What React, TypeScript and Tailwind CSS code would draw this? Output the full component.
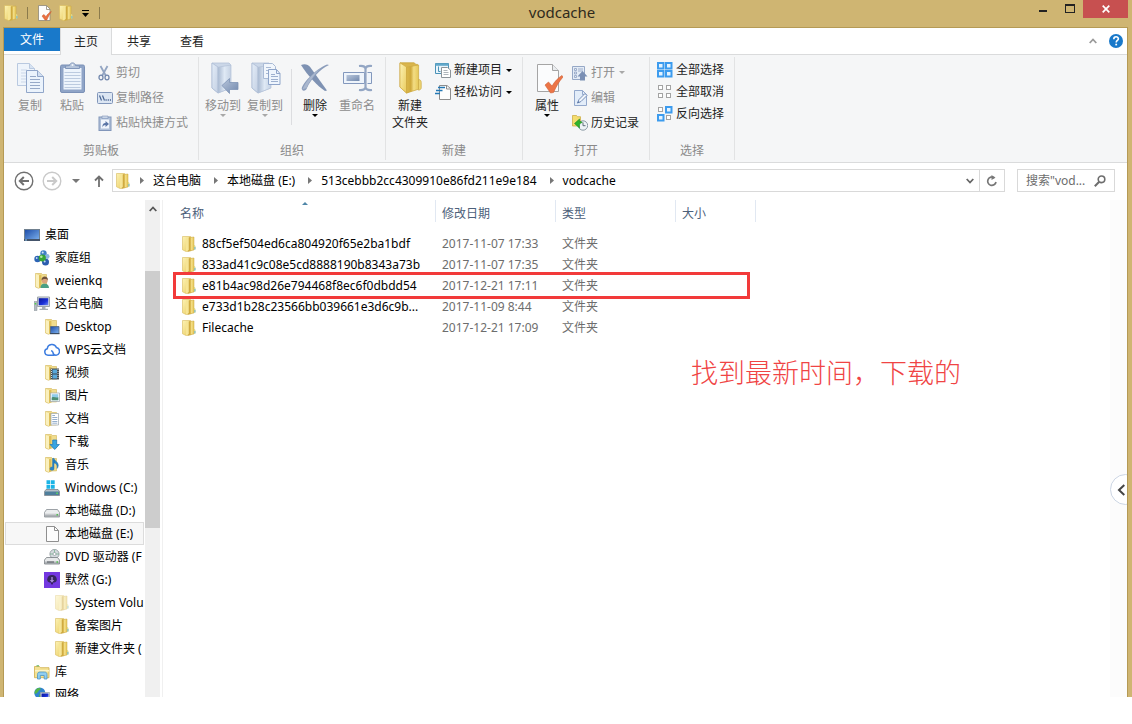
import type { ReactNode } from "react";

/* ---------- shared gradients ---------- */

function Gradients() {
  return (
    <svg className="absolute h-0 w-0" aria-hidden="true">
      <defs>
        <linearGradient id="gold" x1="0" x2="1" y1="0" y2="0">
          <stop offset="0" stopColor="#dcb94a" />
          <stop offset="0.35" stopColor="#cfa93c" />
          <stop offset="0.6" stopColor="#f3dd84" />
          <stop offset="1" stopColor="#e6c858" />
        </linearGradient>
        <linearGradient id="goldLeft" x1="0" x2="1" y1="0" y2="1">
          <stop offset="0" stopColor="#fcf2b4" />
          <stop offset="1" stopColor="#eacb5c" />
        </linearGradient>
        <linearGradient id="blueLeft" x1="0" x2="1" y1="0" y2="1">
          <stop offset="0" stopColor="#e4edf8" />
          <stop offset="1" stopColor="#c3d0e3" />
        </linearGradient>
        <linearGradient id="blueFront" x1="0" x2="1" y1="0" y2="0">
          <stop offset="0" stopColor="#a9b9d1" />
          <stop offset="0.5" stopColor="#dfe9f5" />
          <stop offset="1" stopColor="#c4d1e3" />
        </linearGradient>
        <linearGradient id="slate" x1="0" x2="1" y1="0" y2="1">
          <stop offset="0" stopColor="#b9c7dc" />
          <stop offset="1" stopColor="#7188ad" />
        </linearGradient>
        <linearGradient id="screen" x1="0" x2="1" y1="0" y2="1">
          <stop offset="0" stopColor="#1b4aa6" />
          <stop offset="1" stopColor="#7fb4f0" />
        </linearGradient>
        <linearGradient id="night" x1="0" x2="1" y1="0" y2="1">
          <stop offset="0" stopColor="#0a1796" />
          <stop offset="0.6" stopColor="#1a2fd8" />
          <stop offset="1" stopColor="#6f8df5" />
        </linearGradient>
        <linearGradient id="drive" x1="0" x2="0" y1="0" y2="1">
          <stop offset="0" stopColor="#f2f3f4" />
          <stop offset="1" stopColor="#8e9499" />
        </linearGradient>
      </defs>
    </svg>
  );
}

/* ---------- folder shapes ---------- */

function FolderShape() {
  return (
    <>
      <path d="M1.500.5h8l1 1v13L5 15.500 1.500 13.800z" fill="url(#goldLeft)" stroke="#d9bb5c" strokeWidth="0.600" />
      <path d="M5 1.800 8 1.200v13L5 15.300z" fill="#f6e596" />
      <path d="M8 1.500 13 1v13L6.800 15.400 8 13.800z" fill="url(#gold)" stroke="#cba742" strokeWidth="0.500" />
      <path d="M13 9c1.500.2 1.700 1 1.500 4.200L13 14z" fill="#dcd88a" />
      <path d="M13.400 11h1v2.400h-1z" fill="#6fb7d8" />
    </>
  );
}

function Icon({ children, className = "" }: { children: ReactNode; className?: string }) {
  return (
    <svg viewBox="0 0 16 16" className={`size-4 shrink-0 ${className}`} aria-hidden="true">
      {children}
    </svg>
  );
}

const FolderIcon = () => (
  <Icon>
    <FolderShape />
  </Icon>
);

const PaleFolderIcon = () => (
  <Icon className="opacity-50">
    <FolderShape />
  </Icon>
);

function FolderWith({ children }: { children: ReactNode }) {
  return (
    <Icon>
      <path d="M1.500.5h6l1 1h4v12.400H8L4.400 15.200 1.500 14z" fill="#f0dc8e" stroke="#d9bd66" strokeWidth="0.700" />
      <path d="M1.800.9 5 2.300v12.600L1.800 13.500z" fill="#faf0bd" />
      <path d="M5 2.300 7.400 1.700v12.400L5 14.900z" fill="#dfbf58" />
      {children}
    </Icon>
  );
}

function BigFolderShape() {
  return (
    <>
      <path d="M1 .8h14l2 1.600h1.600V26L7.600 31 1 25z" fill="#d9b54c" stroke="#c9a53c" strokeWidth="0.800" />
      <path d="M1 .9 7.600 5v26L1 25.200z" fill="url(#goldLeft)" stroke="#d2ae45" strokeWidth="0.700" />
      <path d="M7.600 5.200 19.600 3v24.200L7.600 31z" fill="url(#gold)" stroke="#cda942" strokeWidth="0.700" />
      <path d="M19.600 17.500c1.800.2 2.600 1.200 2.600 3v5.300c0 1.400-1 2-2.600 2.400z" fill="#efd877" stroke="#c9a53c" strokeWidth="0.700" />
    </>
  );
}

function BlueFolderShape() {
  return (
    <>
      <path d="M1 1h17l1.500 1.500V26L7 31 1 26z" fill="#cbd7e8" stroke="#b3c2d8" strokeWidth="0.800" />
      <path d="M1 1 7 5v26l-6-5z" fill="url(#blueLeft)" stroke="#a9b9d2" strokeWidth="0.700" />
      <path d="M7 5.200 20 3v23L7 31z" fill="url(#blueFront)" stroke="#b3c2d8" strokeWidth="0.700" />
    </>
  );
}

/* ---------- ribbon icons ---------- */

function Big({ children }: { children: ReactNode }) {
  return (
    <svg viewBox="0 0 32 32" className="size-8 shrink-0" aria-hidden="true">
      {children}
    </svg>
  );
}

const CopyIcon = () => (
  <Big>
    <path d="M3.500 1.500h12l5 5v17h-17z" fill="#eef4fb" stroke="#b9c9e0" />
    <path d="M15.500 1.500v5h5" fill="#d7e3f2" stroke="#b9c9e0" />
    <path d="M7 8h6M7 11h6M7 14h6M7 17h6M7 20h6" stroke="#cbd7e8" />
    <path d="M12.500 8.500h11l6 6v16h-17z" fill="#ebf3fc" stroke="#91a6c9" />
    <path d="M23.500 8.500v6h6" fill="#d3e0f1" stroke="#91a6c9" />
    <path d="M16 14.500h6M16 17.500h10M16 20.500h10M16 23.500h10M16 26.500h10" stroke="#96a9c8" />
  </Big>
);

const PasteIcon = () => (
  <Big>
    <rect x="4.500" y="3" width="24" height="27.500" rx="1.500" fill="#8fa4c7" stroke="#7b91b7" />
    <path d="M7.500 6h18v21.500h-18z" fill="#edf4fc" />
    <path d="M8.500 10.500h16M8.500 13.500h16M8.500 16.500h16M8.500 19.500h16M8.500 22.500h16M8.500 25.500h16" stroke="#bccbe0" />
    <path d="M9.500 6.500V4l4-.5C14 0 19 0 19.500 3.500l4 .5v2.500z" fill="#b6c5db" stroke="#8297ba" />
    <circle cx="16.500" cy="3" r="1" fill="#f4f7fb" />
  </Big>
);

const MoveToIcon = () => (
  <Big>
    <g transform="translate(4 0)">
      <BlueFolderShape />
    </g>
    <path d="m15 23.500 7.500-7v4h8.500v7h-8.500v4z" fill="url(#slate)" stroke="#7f94b6" strokeWidth="0.800" />
  </Big>
);

const CopyToIcon = () => (
  <Big>
    <g transform="translate(2 0)">
      <BlueFolderShape />
      <path d="M12.500 1.500h9l3 3v12h-12z" fill="#f1f6fc" stroke="#a9bad5" />
      <path d="M15 5.500h5M15 8.500h7M15 11.500h7" stroke="#a9bad5" />
      <path d="M17.500 7.500h8l3.500 4v11h-11.500z" fill="#eef5fd" stroke="#8fa5ca" />
      <path d="M25.500 7.500v4H29" fill="none" stroke="#8fa5ca" />
      <path d="M20 12.500h4M20 14.500h7M20 17.500h7M20 19.500h7" stroke="#9db0cf" />
    </g>
  </Big>
);

const DeleteIcon = () => (
  <Big>
    <path d="M2 3c4-1.500 7-.5 9.500 2.500L28 28.500l-2 .5C18 23.500 9 14 2 3z" fill="#7e92b3" />
    <path d="M30 3c-9 4-18 14-22 23-1 3-4 3.500-5 1.500C1 24 16 7 28 2.500z" fill="#8b9dbb" />
    <path d="M3.500 27.500C6 20 14 11 22 6 15 13 10 20 7.500 26z" fill="#a9b7ce" />
  </Big>
);

const RenameIcon = () => (
  <Big>
    <path d="M2.500 10.500h21v11h-21z" fill="#eef4fb" stroke="#8398bd" />
    <path d="M26.500 10.500h4v11h-4" fill="#eef4fb" stroke="#8398bd" />
    <path d="M5.500 13h13v6h-13z" fill="url(#slate)" />
    <path d="M18 4c4-.5 6 .5 6.500 2.500C25 4.500 27 3.500 31 4M18 28c4 .5 6-.5 6.500-2.500.5 2 2.500 3 6.500 2.500M24.500 6v20" fill="none" stroke="#93a6c4" strokeWidth="2.200" />
  </Big>
);

const NewFolderIcon = () => (
  <Big>
    <g transform="translate(5 0)">
      <BigFolderShape />
    </g>
  </Big>
);

const PropertiesIcon = () => (
  <Big>
    <path d="M6.500 2.500h15l6 6v21h-21z" fill="#fbfcfd" stroke="#a5a5a5" />
    <path d="M21.500 2.500v6h6" fill="#e9ecef" stroke="#a5a5a5" />
    <path d="m14 23 3.500-3 3.500 4c3-5 6-8 10-10.500l1 1.500c-4 4.500-6.500 9-9.500 15.500l-3 .5z" fill="#ec7547" stroke="#cf5f34" strokeWidth="0.600" />
  </Big>
);

const CutIcon = () => (
  <Icon>
    <path d="M3.500 1 9 11M10.500 1 5 11" stroke="#93a5c2" strokeWidth="1.800" />
    <ellipse cx="4" cy="12.500" rx="2" ry="2.400" fill="none" stroke="#7388ad" strokeWidth="1.300" />
    <ellipse cx="10" cy="12.500" rx="2" ry="2.400" fill="none" stroke="#7388ad" strokeWidth="1.300" />
  </Icon>
);

const CopyPathIcon = () => (
  <Icon>
    <rect x="0.500" y="2.500" width="15" height="11" rx="1" fill="#dce6f3" stroke="#8196ba" />
    <path d="m2.500 5.500 2 5M5.500 5.500l2 5" stroke="#4a6694" strokeWidth="1.200" />
    <path d="M8.500 10h1.200M10.700 10h1.200M12.900 10H14" stroke="#4a6694" strokeWidth="1.300" />
  </Icon>
);

const PasteShortcutIcon = () => (
  <Icon>
    <rect x="2" y="2" width="12" height="13.500" fill="#b1c1d9" stroke="#8196ba" />
    <path d="M4 4.500h8v9H4z" fill="#f1f6fc" />
    <path d="M5 1h6v2.500H5z" fill="#c9d5e6" stroke="#8196ba" strokeWidth="0.600" />
    <path d="M5.500 12.500c-.3-3 .6-4.500 3-4.500V6L12 9l-3.500 3v-2c-1.500 0-2.300.7-3 2.500z" fill="#5b76a6" />
  </Icon>
);

const NewItemIcon = () => (
  <Icon>
    <path d="M.5 1.500h13v10H.5z" fill="#eaf5fc" stroke="#4b93b8" />
    <path d="M.5 1.500h13v2.300H.5z" fill="#62a8ca" />
    <path d="M3.500 4.500v5h2" stroke="#4b93b8" fill="none" />
    <path d="M6.500 5.500h6l3 2.500v7.500h-9z" fill="#fff" stroke="#8d9499" />
    <path d="M8.500 8.500h4M8.500 10.500h5M8.500 12.500h5" stroke="#9aa3aa" strokeWidth="0.800" />
  </Icon>
);

const EasyAccessIcon = () => (
  <Icon>
    <path d="M4.500 1.500h7.500l3.500 3v11h-11z" fill="#fdfdfd" stroke="#8d8d8d" />
    <path d="M11.500 1.500v3.500h4" fill="none" stroke="#8d8d8d" />
    <path d="M3 3.500h7M1 6.500h6.500M0 9.500h5" stroke="#2378b5" strokeWidth="1.300" />
  </Icon>
);

const OpenIcon = () => (
  <Icon>
    <path d="M.5 1.500h12v13H.5z" fill="#e4ecf6" stroke="#96a8c6" />
    <path d="M2.500 3.500h2v2h-2zM2.500 7h2v2h-2zM2.500 10.500h2v2h-2zM6 4h5M6 6h5" stroke="#96a8c6" strokeWidth="0.900" fill="none" />
    <path d="m10.500 6 5 5.500H13v4H8v-4H5.500z" fill="#7a8fb4" />
  </Icon>
);

const EditIcon = () => (
  <Icon>
    <path d="M2.500.5h8l4 4v11h-12z" fill="#e3edf9" stroke="#94a9cc" />
    <path d="M10.500.5v4h4" fill="none" stroke="#94a9cc" />
    <path d="M5.500 13 7 9.500l6-6L15 5.500l-6 6z" fill="#f2f6fb" stroke="#7890b9" />
    <path d="m5.200 13.300 1-2.300 1.500 1.500z" fill="#5b76a6" />
  </Icon>
);

const HistoryIcon = () => (
  <Icon>
    <path d="M.5.500h4l1 1.200h3V11h-8z" fill="#f4dd6f" stroke="#c9a63a" strokeWidth="0.700" />
    <circle cx="11" cy="10.500" r="4.700" fill="#eef3f6" stroke="#8a9aa4" />
    <path d="M11 7.500v3.200h2.500" fill="none" stroke="#5d6d78" />
    <path d="M2.500 8.500 7.500 4v2.600c1.500 0 2.300.3 2.800.9-1.500.3-2.600 1-2.800 2.500V13z" fill="#2fb32b" stroke="#178a1c" strokeWidth="0.600" />
  </Icon>
);

function Tile({ x, y, on }: { x: number; y: number; on: boolean }) {
  return on ? (
    <>
      <rect x={x} y={y} width="7.500" height="7.500" fill="#3c9bee" />
      <rect x={x + 2} y={y + 2} width="3.500" height="3.500" fill="#e3f3ff" />
    </>
  ) : (
    <rect x={x + 1.5} y={y + 1.5} width="4" height="4" fill="#fff" stroke="#a3a3a3" />
  );
}

function TilesIcon({ on }: { on: [boolean, boolean, boolean, boolean] }) {
  return (
    <Icon>
      <Tile x={0} y={0} on={on[0]} />
      <Tile x={8} y={0} on={on[1]} />
      <Tile x={0} y={8} on={on[2]} />
      <Tile x={8} y={8} on={on[3]} />
    </Icon>
  );
}

function Caret({ className = "text-black" }: { className?: string }) {
  return (
    <svg viewBox="0 0 6 3" className={`h-[3px] w-[6px] shrink-0 ${className}`} aria-hidden="true">
      <path d="M0 0h6L3 3z" fill="currentColor" />
    </svg>
  );
}

/* ---------- navigation tree icons ---------- */

const DesktopIcon = () => (
  <Icon>
    <rect x="0.500" y="2.500" width="15" height="11" fill="url(#screen)" stroke="#70808f" />
    <path d="M0 12h16v2H0z" fill="#44546a" />
    <path d="M1 12.500h2v1H1z" fill="#8ec6ef" />
  </Icon>
);

const HomeGroupIcon = () => (
  <Icon>
    <circle cx="9.500" cy="3.500" r="3.200" fill="#3f7fc4" />
    <circle cx="3.500" cy="9" r="3.200" fill="#2d64b5" />
    <circle cx="11.500" cy="12" r="3.500" fill="#2a5cae" />
    <circle cx="13.200" cy="6.500" r="2.400" fill="#8ab4de" />
    <circle cx="8.300" cy="8" r="3.600" fill="#35a535" />
    <circle cx="7.300" cy="6.800" r="1.300" fill="#b1e5a4" />
    <circle cx="8.700" cy="2.500" r="1" fill="#d3e7f8" />
    <circle cx="2.700" cy="8" r="0.900" fill="#c3dbf3" />
    <circle cx="10.700" cy="11.500" r="1" fill="#b9d4f1" />
  </Icon>
);

const UserIcon = () => (
  <FolderWith>
    <path d="M6.500 15c0-3 1.500-4.500 4-4.500s4.500 1.500 4.500 4.500z" fill="#4b9f85" />
    <circle cx="10.700" cy="7.500" r="3" fill="#dba47d" />
    <path d="M7.600 7.500C7.300 4.700 9 3.600 10.700 3.600s3.500 1.100 3.200 3.900c-1-1.700-4.500-2-6.300 0z" fill="#70523c" />
  </FolderWith>
);

const ComputerIcon = () => (
  <Icon>
    <path d="M0 5.500h3v9H0z" fill="#b4bcc2" stroke="#858e95" strokeWidth="0.500" />
    <path d="M.7 7h1.500v1.500H.7z" fill="#4fd04c" />
    <path d="M3.500 1h12v9.500h-12z" fill="#dadfe3" stroke="#9ba3aa" />
    <path d="M4.700 2.200h9.600v7H4.700z" fill="url(#night)" />
    <path d="M8 11h3.500v1.800H14V14H5.500v-1.200H8z" fill="#a5adb4" />
  </Icon>
);

const DesktopFolderIcon = () => (
  <FolderWith>
    <path d="M6.500 7.500H15v7H6.500z" fill="url(#screen)" stroke="#56677c" strokeWidth="0.800" />
    <path d="M6 14h9.500v1.200H6z" fill="#3c4c60" />
  </FolderWith>
);

const CloudIcon = () => (
  <Icon>
    <path
      d="M10.500 13.200H4A3.300 3.300 0 0 1 3.300 6.700 4.700 4.700 0 0 1 12.400 5.500 3.900 3.900 0 0 1 12 13.200c-1.800 0-2.800-1-3-2.500a2.200 2.200 0 0 0-2-1.900"
      fill="none"
      stroke="#3d7de0"
      strokeWidth="1.500"
    />
  </Icon>
);

const VideoIcon = () => (
  <FolderWith>
    <path d="M6.500 3.500h8.500v11H6.500z" fill="#40484f" />
    <path d="M8.500 4.500H13v4H8.500zM8.500 9.500H13v4H8.500z" fill="#58a8da" />
    <path d="M7.500 4v10.500M14 4v10.500" stroke="#e2e6e9" strokeWidth="0.900" strokeDasharray="1 1" />
  </FolderWith>
);

const PictureIcon = () => (
  <FolderWith>
    <path d="M6.500 5h9v8.500h-9z" fill="#fff" stroke="#9aa5ad" strokeWidth="0.700" />
    <path d="M7.700 6.200h6.600v6H7.700z" fill="#8fcbea" />
    <path d="M7.700 12.200v-2.500c2-1.500 4 .5 6.600-.5v3z" fill="#4c8f75" />
  </FolderWith>
);

const DocumentIcon = () => (
  <FolderWith>
    <path d="M7 2.500h7.500v11.500H7z" fill="#fff" stroke="#9aa5ad" strokeWidth="0.700" />
    <path d="M8.300 4.500H11M8.300 6.500h5M8.300 8.500h5M8.300 10.500h5M8.300 12.200h5" stroke="#7a9bc0" strokeWidth="0.800" />
  </FolderWith>
);

const DownloadIcon = () => (
  <FolderWith>
    <path d="M8.700 6h4v4.500h2.700L10.700 15.500 6 10.500h2.700z" fill="#39a4e2" stroke="#1b76b6" strokeWidth="0.700" />
  </FolderWith>
);

const MusicIcon = () => (
  <FolderWith>
    <path d="M10 3v8.500a2 1.700 0 1 1-1.500-1.500V1.500L10 1.300c.5 3 4.300 3.200 4.300 7 0 1.500-.6 2.700-1.300 3.200.8-3.500-.8-5-3-5.500z" fill="#2a86c8" stroke="#1c6aa6" strokeWidth="0.400" />
  </FolderWith>
);

const WindowsDriveIcon = () => (
  <Icon>
    <path d="M2.500.3H6v3.900H2.500zM6.700.3h4v3.900h-4zM2.500 4.900H6v3.900H2.500zM6.700 4.900h4v3.900h-4z" fill="#1bb4e6" />
    <path d="M2 9.500h12l1.500 2v4H.5v-4z" fill="#b6c0c8" stroke="#6c7780" strokeWidth="0.700" />
    <path d="M1 11.500h14v3.500H1z" fill="#4f7f9c" />
    <path d="M12.300 12.500h1.500v1.500h-1.500z" fill="#5fe05a" />
  </Icon>
);

const DriveIcon = () => (
  <Icon>
    <path d="M2.500 6.500h11l2 3v4.500H.5V9.500z" fill="#eceeef" stroke="#878d92" strokeWidth="0.800" />
    <path d="M.9 9.800h14.200v3.900H.9z" fill="url(#drive)" />
    <path d="M12.500 11H14v1.500h-1.500z" fill="#4fc24c" />
  </Icon>
);

const BlankFileIcon = () => (
  <Icon>
    <path d="M2.500.5h8l4 4v11h-12z" fill="#fdfdfd" stroke="#8f8f8f" />
    <path d="M10.500.5v4h4" fill="none" stroke="#8f8f8f" />
  </Icon>
);

const DvdIcon = () => (
  <Icon>
    <circle cx="10.500" cy="5" r="4.600" fill="#d4dade" stroke="#8e969c" strokeWidth="0.800" />
    <circle cx="10.500" cy="5" r="1.500" fill="#fff" stroke="#8e969c" strokeWidth="0.700" />
    <path d="M10.500.6v3M6 5h3M12 5h3" stroke="#6fb086" strokeWidth="0.700" />
    <path d="M2.500 8.500h11l2 2.500v4H.5v-4z" fill="#e7e9ea" stroke="#767c81" strokeWidth="0.800" />
    <path d="M.9 11.200h14.200v3.500H.9z" fill="url(#drive)" />
    <path d="M3 13h7" stroke="#4f555a" />
    <path d="M12.500 12.300H14v1.400h-1.500z" fill="#4fc24c" />
  </Icon>
);

const PurpleDriveIcon = () => (
  <Icon>
    <path d="M0 0h16v16H0z" fill="#7338e0" />
    <path d="M8 3c3 0 4.800 2 4.800 4.500C12.800 9 12 10 10.500 10.500h-5C4 10 3.200 9 3.200 7.500 3.200 5 5 3 8 3z" fill="#35275c" />
    <path d="M7.300 5h1.400v3h1.500L8 10.700 5.800 8h1.500z" fill="#a58ad6" />
    <path d="M6.500 10.500h3L8 13z" fill="#2c1f52" />
  </Icon>
);

const LibraryIcon = () => (
  <Icon>
    <path d="M.5 2.500h5l1 1.200h8.500v10H.5z" fill="#f4e294" stroke="#cfae4c" strokeWidth="0.800" />
    <path d="M2.500 1.800H5" stroke="#57b05c" />
    <path d="M1 6h14v1.500H1z" fill="#fbf4c8" />
    <path d="M3.500 15V10.500c0-1.700 1-2.500 2.500-2.500h4.500C12 8 13 8.800 13 10.500V15h-2.800v-3.500H6.300V15z" fill="#8fcdf0" stroke="#4b95c4" strokeWidth="0.800" />
  </Icon>
);

const NetworkIcon = () => (
  <Icon>
    <circle cx="5.800" cy="6" r="5.500" fill="#2f83d0" />
    <path d="M2 2.500c2-2 4-1.500 5-1-1 2-2.500 1.700-3 3.500-1 .8-2 2.500-3.400 1.500C.5 5 1 3.500 2 2.500zM5.500 7c2 0 3 1.500 2 4H5z" fill="#53b548" />
    <path d="M6.500 5.500h9v7h-9z" fill="#dbe1e6" stroke="#929ca5" strokeWidth="0.700" />
    <path d="M7.500 6.500h7v5h-7z" fill="url(#night)" />
    <path d="M9 12.500h4v1.500H9z" fill="#98a2aa" />
  </Icon>
);

/* ---------- title bar ---------- */

function TitleBar() {
  return (
    <header className="grid h-[27px] grid-cols-[1fr_auto_1fr]">
      <div className="flex h-[25px] items-center">
        <span className="pl-[3px]">
          <FolderIcon />
        </span>
        <span className="ml-2 h-3 w-px bg-[#8b7a4c]" />
        <button aria-label="属性" className="ml-2">
          <Icon>
            <path d="M2.500.5h8l3.500 3.500v11.500H2.500z" fill="#fdfdfd" stroke="#8e8877" strokeWidth="0.800" />
            <path d="M10.500.5v4H14" fill="none" stroke="#8e8877" strokeWidth="0.800" />
            <path d="m6 11 2-1.500 2 2.300c1.200-2.500 3-4 5.300-5.300-1.500 2.500-3.300 5.500-4.500 8.500H9z" fill="#ea6f40" stroke="#cb5b2f" strokeWidth="0.500" />
          </Icon>
        </button>
        <button aria-label="新建文件夹" className="ml-[6px]">
          <FolderIcon />
        </button>
        <button aria-label="自定义快速访问工具栏" className="ml-2 flex flex-col items-center gap-[2px] pt-[2px]">
          <span className="h-px w-[7px] bg-black" />
          <svg viewBox="0 0 7 4" className="h-1 w-[7px]" aria-hidden="true">
            <path d="M0 0h7L3.500 4z" fill="#000" />
          </svg>
        </button>
        <span className="ml-[10px] h-3 w-px bg-[#8b7a4c]" />
      </div>
      <h1 className="pr-2 text-[15px] leading-[25px] text-[#2f2a1c]">vodcache</h1>
      <div className="flex items-start justify-end pr-1">
        <button aria-label="最小化" className="grid h-[18px] w-[27px] place-items-center">
          <span className="mt-1 h-[2px] w-2 bg-[#222]" />
        </button>
        <button aria-label="最大化" className="grid h-[18px] w-[27px] place-items-center">
          <span className="mb-px h-[9px] w-[10px] border border-t-2 border-[#222]" />
        </button>
        <button aria-label="关闭" className="grid h-[18px] w-[45px] place-items-center bg-[#c75050]">
          <svg viewBox="0 0 8 8" className="size-2" aria-hidden="true">
            <path d="m.7.7 6.600 6.600M7.300.7.700 7.300" stroke="#fff" strokeWidth="1.700" />
          </svg>
        </button>
      </div>
    </header>
  );
}

/* ---------- ribbon ---------- */

function TabStrip() {
  return (
    <nav className="flex h-[27px] border-b border-[#dadbdc] bg-white text-[#222]">
      <button className="h-[23px] w-14 bg-[#1979ca] text-white">文件</button>
      <button className="-mb-px h-[27px] w-[52px] border-x border-[#dadbdc] bg-[#f5f6f7]">主页</button>
      <button className="h-[27px] w-[54px]">共享</button>
      <button className="h-[27px] w-[52px]">查看</button>
      <div className="ml-auto flex h-[26px] items-center gap-3 pr-1">
        <button aria-label="折叠功能区">
          <svg viewBox="0 0 8 6" className="h-[6px] w-2" aria-hidden="true">
            <path d="m.7 5 3.300-3.500L7.300 5" fill="none" stroke="#9a9a9a" strokeWidth="1.800" />
          </svg>
        </button>
        <button aria-label="帮助">
          <svg viewBox="0 0 14 14" className="size-[14px]" aria-hidden="true">
            <circle cx="7" cy="7" r="7" fill="#1979ca" />
            <path d="M4.800 5.200c0-3.200 4.600-3.100 4.600-.4 0 1.700-2.200 1.700-2.200 3.600" fill="none" stroke="#fff" strokeWidth="1.600" />
            <path d="M6.300 9.700h1.800v1.700H6.300z" fill="#fff" />
          </svg>
        </button>
      </div>
    </nav>
  );
}

function Group({ label, className, children }: { label: string; className: string; children: ReactNode }) {
  return (
    <section aria-label={label} className={`my-[2px] flex flex-col border-r border-[#e2e3e4] ${className}`}>
      <div className="flex flex-1 items-start">{children}</div>
      <p className="pb-px text-center leading-4 text-[#8a8a8a]">{label}</p>
    </section>
  );
}

interface BigButtonProps {
  icon: ReactNode;
  lines: string[];
  disabled?: boolean;
  menu?: boolean;
}

function BigButton({ icon, lines, disabled, menu }: BigButtonProps) {
  return (
    <button
      disabled={disabled}
      className={`flex w-[42px] flex-col items-center pt-[5px] leading-[17px] whitespace-nowrap ${disabled ? "text-[#8d8d8d]" : "text-[#222]"}`}
    >
      {icon}
      <span className="mt-[3px]">
        {lines.map((line) => (
          <span key={line} className="block">
            {line}
          </span>
        ))}
      </span>
      {menu && <Caret className={disabled ? "text-[#a8a8a8]" : "text-black"} />}
    </button>
  );
}

interface SmallButtonProps {
  icon: ReactNode;
  text: string;
  disabled?: boolean;
  menu?: boolean;
  short?: boolean;
}

function SmallButton({ icon, text, disabled, menu, short }: SmallButtonProps) {
  return (
    <button
      disabled={disabled}
      className={`flex items-center gap-[3px] whitespace-nowrap ${short ? "h-[22px]" : "h-[25px]"} ${disabled ? "text-[#8d8d8d]" : "text-[#222]"}`}
    >
      {icon}
      {text}
      {menu && (
        <span className="pl-px">
          <Caret className={disabled ? "text-[#a8a8a8]" : "text-black"} />
        </span>
      )}
    </button>
  );
}

function Ribbon() {
  return (
    <div className="flex h-[108px] border-b border-[#dadbdc] bg-[#f5f6f7]">
      <Group label="剪贴板" className="w-[195px]">
        <div className="flex pl-[5px]">
          <BigButton icon={<CopyIcon />} lines={["复制"]} disabled />
          <BigButton icon={<PasteIcon />} lines={["粘贴"]} disabled />
        </div>
        <div className="pt-[3px] pl-1">
          <SmallButton icon={<CutIcon />} text="剪切" disabled />
          <SmallButton icon={<CopyPathIcon />} text="复制路径" disabled />
          <SmallButton icon={<PasteShortcutIcon />} text="粘贴快捷方式" disabled />
        </div>
      </Group>
      <Group label="组织" className="w-[187px]">
        <div className="flex pl-[3px]">
          <BigButton icon={<MoveToIcon />} lines={["移动到"]} disabled menu />
          <BigButton icon={<CopyToIcon />} lines={["复制到"]} disabled menu />
        </div>
        <div className="mt-3 ml-[5px] h-[56px] w-px bg-[#dcdde0]" />
        <div className="flex pl-[2px]">
          <BigButton icon={<DeleteIcon />} lines={["删除"]} menu />
          <BigButton icon={<RenameIcon />} lines={["重命名"]} disabled />
        </div>
      </Group>
      <Group label="新建" className="w-[137px]">
        <div className="flex pl-[3px]">
          <BigButton icon={<NewFolderIcon />} lines={["新建", "文件夹"]} />
        </div>
        <div className="pt-[2px] pl-1">
          <SmallButton icon={<NewItemIcon />} text="新建项目" menu short />
          <SmallButton icon={<EasyAccessIcon />} text="轻松访问" menu short />
        </div>
      </Group>
      <Group label="打开" className="w-[127px]">
        <div className="flex pl-[3px]">
          <BigButton icon={<PropertiesIcon />} lines={["属性"]} menu />
        </div>
        <div className="pt-[3px] pl-1">
          <SmallButton icon={<OpenIcon />} text="打开" disabled menu />
          <SmallButton icon={<EditIcon />} text="编辑" disabled />
          <SmallButton icon={<HistoryIcon />} text="历史记录" />
        </div>
      </Group>
      <Group label="选择" className="w-[85px]">
        <div className="pt-[2px] pl-[7px]">
          <SmallButton icon={<TilesIcon on={[true, true, true, true]} />} text="全部选择" short />
          <SmallButton icon={<TilesIcon on={[false, false, false, false]} />} text="全部取消" short />
          <SmallButton icon={<TilesIcon on={[false, true, true, false]} />} text="反向选择" short />
        </div>
      </Group>
    </div>
  );
}

/* ---------- address bar ---------- */

function RoundArrow({ label, color, flip }: { label: string; color: string; flip?: boolean }) {
  return (
    <button aria-label={label} className={color}>
      <svg viewBox="0 0 20 20" className={`size-5 ${flip ? "rotate-180" : ""}`} aria-hidden="true">
        <circle cx="10" cy="10" r="8.800" fill="none" stroke="currentColor" strokeWidth="1.400" />
        <path d="M15 10H6M9.800 6 5.800 10l4 4" fill="none" stroke="currentColor" strokeWidth="2" />
      </svg>
    </button>
  );
}

const crumbs = ["这台电脑", "本地磁盘 (E:)", "513cebbb2cc4309910e86fd211e9e184", "vodcache"];

function AddressBar() {
  return (
    <div className="flex h-[37px] items-center pr-3 pb-[2px] pl-[10px]">
      <RoundArrow label="后退" color="text-[#707070]" />
      <span className="w-2" />
      <RoundArrow label="前进" color="text-[#c9c9c9]" flip />
      <button aria-label="最近浏览的位置" className="ml-[10px] text-[#777]">
        <svg viewBox="0 0 8 4" className="h-1 w-2" aria-hidden="true">
          <path d="M0 0h8L4 4z" fill="currentColor" />
        </svg>
      </button>
      <button aria-label="上移" className="ml-[14px]">
        <svg viewBox="0 0 10 12" className="h-3 w-[10px]" aria-hidden="true">
          <path d="M5 12V1.500M1 5.500l4-4 4 4" fill="none" stroke="#707070" strokeWidth="1.800" />
        </svg>
      </button>
      <div className="ml-2 flex h-[23px] flex-1 items-center border border-[#d9d9d9] pl-[2px] text-black">
        <FolderIcon />
        {crumbs.map((crumb) => (
          <span key={crumb} className="flex items-center">
            <svg viewBox="0 0 4 7" className="mr-[9px] ml-[9px] h-[7px] w-1" aria-hidden="true">
              <path d="M0 0v7l4-3.500z" fill="#777" />
            </svg>
            <a href="#" className="pr-1 whitespace-nowrap">
              {crumb}
            </a>
          </span>
        ))}
        <button aria-label="以前的位置" className="ml-auto grid h-full w-[18px] place-items-center">
          <svg viewBox="0 0 8 6" className="h-[6px] w-2" aria-hidden="true">
            <path d="m.7 1 3.300 3.500L7.300 1" fill="none" stroke="#666" strokeWidth="1.800" />
          </svg>
        </button>
        <button aria-label="刷新" className="grid h-full w-[25px] place-items-center border-l border-[#d9d9d9]">
          <svg viewBox="0 0 12 12" className="size-3" aria-hidden="true">
            <path d="M8.300 2.800A4.200 4.200 0 1 0 10 7" fill="none" stroke="#777" strokeWidth="1.700" />
            <path d="M5.500 0v5L9.500 2.800z" fill="#777" />
          </svg>
        </button>
      </div>
      <label className="ml-3 flex h-[23px] w-[98px] items-center border border-[#d9d9d9] pr-2 pl-2">
        <input
          aria-label="搜索"
          placeholder={'搜索"vod...'}
          className="w-0 flex-1 bg-transparent outline-none placeholder:text-[#6d6d6d] placeholder:opacity-100"
        />
        <svg viewBox="0 0 12 12" className="size-3" aria-hidden="true">
          <circle cx="7.500" cy="4.300" r="3.300" fill="none" stroke="#6d6d6d" strokeWidth="1.600" />
          <path d="M5.200 6.800.8 11.200" stroke="#6d6d6d" strokeWidth="2" />
        </svg>
      </label>
    </div>
  );
}

/* ---------- navigation tree ---------- */

interface TreeNode {
  label: string;
  level: 0 | 1 | 2 | 3;
  icon: ReactNode;
  selected?: boolean;
}

const tree: TreeNode[] = [
  { label: "桌面", level: 0, icon: <DesktopIcon /> },
  { label: "家庭组", level: 1, icon: <HomeGroupIcon /> },
  { label: "weienkq", level: 1, icon: <UserIcon /> },
  { label: "这台电脑", level: 1, icon: <ComputerIcon /> },
  { label: "Desktop", level: 2, icon: <DesktopFolderIcon /> },
  { label: "WPS云文档", level: 2, icon: <CloudIcon /> },
  { label: "视频", level: 2, icon: <VideoIcon /> },
  { label: "图片", level: 2, icon: <PictureIcon /> },
  { label: "文档", level: 2, icon: <DocumentIcon /> },
  { label: "下载", level: 2, icon: <DownloadIcon /> },
  { label: "音乐", level: 2, icon: <MusicIcon /> },
  { label: "Windows (C:)", level: 2, icon: <WindowsDriveIcon /> },
  { label: "本地磁盘 (D:)", level: 2, icon: <DriveIcon /> },
  { label: "本地磁盘 (E:)", level: 2, icon: <BlankFileIcon />, selected: true },
  { label: "DVD 驱动器 (F", level: 2, icon: <DvdIcon /> },
  { label: "默然 (G:)", level: 2, icon: <PurpleDriveIcon /> },
  { label: "System Volu", level: 3, icon: <PaleFolderIcon /> },
  { label: "备案图片", level: 3, icon: <FolderIcon /> },
  { label: "新建文件夹 (", level: 3, icon: <FolderIcon /> },
  { label: "库", level: 1, icon: <LibraryIcon /> },
  { label: "网络", level: 1, icon: <NetworkIcon /> },
];

const indents = ["pl-[18px]", "pl-[28px]", "pl-[38px]", "pl-[48px]"];

function Sidebar() {
  return (
    <aside className="flex w-[159px] shrink-0 overflow-hidden border-r border-[#f0f0f0]">
      <ul className="w-[141px] overflow-hidden pt-[23px] pr-px pl-px text-black">
        {tree.map((node) => (
          <li key={node.label}>
            <a
              href="#"
              className={`flex h-[23px] items-center gap-[5px] border whitespace-nowrap ${indents[node.level]} ${node.selected ? "border-[#dcdcdc] bg-[#f7f7f7]" : "border-transparent"}`}
            >
              {node.icon}
              {node.label}
            </a>
          </li>
        ))}
      </ul>
      <div className="flex w-[15px] flex-col bg-[#f0f0f0]">
        <button aria-label="向上滚动" className="grid h-[17px] place-items-center">
          <svg viewBox="0 0 8 6" className="h-[6px] w-2" aria-hidden="true">
            <path d="m.7 5 3.300-3.500L7.300 5" fill="none" stroke="#555" strokeWidth="1.800" />
          </svg>
        </button>
        <div className="mt-[54px] h-[257px] bg-[#cdcdcd]" />
      </div>
    </aside>
  );
}

/* ---------- file list ---------- */

const files = [
  { name: "88cf5ef504ed6ca804920f65e2ba1bdf", date: "2017-11-07 17:33" },
  { name: "833ad41c9c08e5cd8888190b8343a73b", date: "2017-11-07 17:35" },
  { name: "e81b4ac98d26e794468f8ec6f0dbdd54", date: "2017-12-21 17:11", marked: true },
  { name: "e733d1b28c23566bb039661e3d6c9b...", date: "2017-11-09 8:44" },
  { name: "Filecache", date: "2017-12-21 17:09" },
];

function FileList() {
  const head = "border-r border-[#e1e8f2] p-0 pt-[6px] pl-[6px] text-left font-normal";
  return (
    <main className="relative flex-1 pl-[11px]">
      <table className="w-[582px] table-fixed border-separate border-spacing-0">
        <colgroup>
          <col className="w-[262px]" />
          <col className="w-[120px]" />
          <col className="w-[120px]" />
          <col className="w-[80px]" />
        </colgroup>
        <thead className="text-[#4c607a]">
          <tr className="h-[22px]">
            <th className={`${head} relative`}>
              名称
              <svg viewBox="0 0 6 3" className="absolute top-[2px] left-[128px] h-[3px] w-[6px]" aria-hidden="true">
                <path d="M0 3h6L3 0z" fill="#4f86a8" />
              </svg>
            </th>
            <th className={head}>修改日期</th>
            <th className={head}>类型</th>
            <th className={head}>大小</th>
          </tr>
        </thead>
        <tbody className="text-[#6d6d6d]">
          <tr className="h-[11px]">
            <td colSpan={4} className="p-0" />
          </tr>
          {files.map((file) => (
            <tr key={file.name} className="relative h-[21px]">
              <td className="p-0 pl-[7px] text-black">
                <span className="flex items-center gap-[5px] whitespace-nowrap">
                  <FolderIcon />
                  {file.name}
                </span>
                {file.marked && (
                  <span className="pointer-events-none absolute -inset-y-[3px] right-[6px] -left-px border-[3px] border-[#f23a3a]" />
                )}
              </td>
              <td className="p-0 pl-[6px] whitespace-nowrap">{file.date}</td>
              <td className="p-0 pl-[6px]">文件夹</td>
              <td className="p-0" />
            </tr>
          ))}
        </tbody>
      </table>
      <p className="absolute top-[153px] left-[528px] text-[27px] leading-10 font-light whitespace-nowrap text-[#f04444]">
        找到最新时间，下载的
      </p>
    </main>
  );
}

export default function App() {
  return (
    <div className="h-screen overflow-hidden bg-white pb-[27px] font-['Noto_Sans','Noto_Sans_CJK_SC',sans-serif] text-[12px] leading-4">
      <Gradients />
      <div className="flex h-full flex-col bg-[#cfb572]">
        <TitleBar />
        <div className="mr-1 ml-[3px] flex min-h-0 flex-1 flex-col border-x border-t border-[#b59a55] bg-white">
          <TabStrip />
          <Ribbon />
          <AddressBar />
          <div className="flex min-h-0 flex-1">
            <Sidebar />
            <FileList />
            <div className="relative w-[17px] overflow-hidden bg-[#fcfcfc]">
              <button
                aria-label="展开侧栏"
                className="absolute top-[274px] left-0 flex size-[31px] items-center rounded-full border border-[#ccd6e4] bg-white pl-[6px]"
              >
                <svg viewBox="0 0 8 12" className="h-3 w-2" aria-hidden="true">
                  <path d="M7.300 1 2 6l5.300 5" fill="none" stroke="#444" strokeWidth="2" />
                </svg>
              </button>
            </div>
          </div>
        </div>
      </div>
    </div>
  );
}
